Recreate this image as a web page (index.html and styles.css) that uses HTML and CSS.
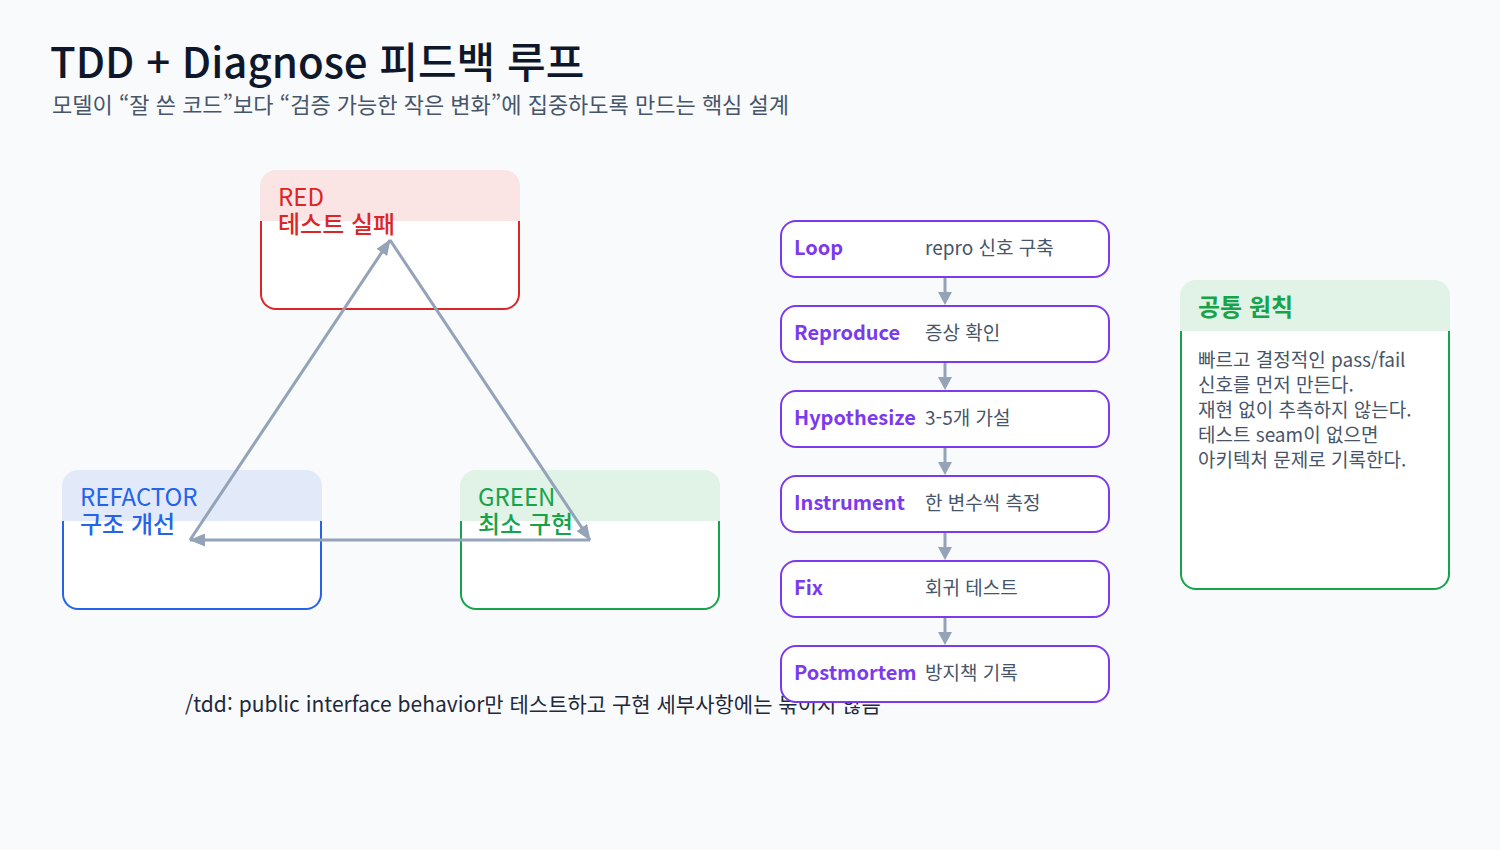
FILE: index.html
```html
<!DOCTYPE html>
<html lang="ko">
<head>
<meta charset="utf-8">
<title>TDD + Diagnose 피드백 루프</title>
<link rel="stylesheet" href="styles.css">
</head>
<body>
<header class="head">
  <h1 class="title">TDD + Diagnose 피드백 루프</h1>
  <p class="subtitle">모델이 “잘 쓴 코드”보다 “검증 가능한 작은 변화”에 집중하도록 만드는 핵심 설계</p>
</header>
<main class="main">
  <section class="cycle">
    <div class="node node-red">
      <div class="node-head"><div class="node-en">RED</div><div class="node-ko">테스트 실패</div></div>
      <div class="node-body"></div>
    </div>
    <div class="node node-blue">
      <div class="node-head"><div class="node-en">REFACTOR</div><div class="node-ko">구조 개선</div></div>
      <div class="node-body"></div>
    </div>
    <div class="node node-green">
      <div class="node-head"><div class="node-en">GREEN</div><div class="node-ko">최소 구현</div></div>
      <div class="node-body"></div>
    </div>
    <svg class="cycle-arrows" width="740" height="540" viewBox="0 0 740 540">
      <defs>
        <marker id="ah" markerUnits="userSpaceOnUse" markerWidth="16" markerHeight="13" viewBox="0 0 16 13" refX="15" refY="6.5" orient="auto">
          <path d="M0,0 L16,6.5 L0,13 z" fill="#94a3b8"/>
        </marker>
      </defs>
      <line x1="190" y1="370" x2="390" y2="70" stroke="#94a3b8" stroke-width="3" marker-end="url(#ah)"/>
      <line x1="390" y1="70" x2="590" y2="370" stroke="#94a3b8" stroke-width="3" marker-end="url(#ah)"/>
      <line x1="590" y1="370" x2="190" y2="370" stroke="#94a3b8" stroke-width="3" marker-end="url(#ah)"/>
    </svg>
    <p class="note">/tdd: public interface behavior만 테스트하고 구현 세부사항에는 묶이지 않음</p>
  </section>

  <section class="flow">
    <div class="step"><span class="step-label">Loop</span><span class="step-desc">repro 신호 구축</span></div>
    <div class="link"><svg width="16" height="27" viewBox="0 0 16 27"><line x1="8" y1="0" x2="8" y2="16" stroke="#94a3b8" stroke-width="3"/><path d="M1,14 L15,14 L8,27 z" fill="#94a3b8"/></svg></div>
    <div class="step"><span class="step-label">Reproduce</span><span class="step-desc">증상 확인</span></div>
    <div class="link"><svg width="16" height="27" viewBox="0 0 16 27"><line x1="8" y1="0" x2="8" y2="16" stroke="#94a3b8" stroke-width="3"/><path d="M1,14 L15,14 L8,27 z" fill="#94a3b8"/></svg></div>
    <div class="step"><span class="step-label">Hypothesize</span><span class="step-desc">3-5개 가설</span></div>
    <div class="link"><svg width="16" height="27" viewBox="0 0 16 27"><line x1="8" y1="0" x2="8" y2="16" stroke="#94a3b8" stroke-width="3"/><path d="M1,14 L15,14 L8,27 z" fill="#94a3b8"/></svg></div>
    <div class="step"><span class="step-label">Instrument</span><span class="step-desc">한 변수씩 측정</span></div>
    <div class="link"><svg width="16" height="27" viewBox="0 0 16 27"><line x1="8" y1="0" x2="8" y2="16" stroke="#94a3b8" stroke-width="3"/><path d="M1,14 L15,14 L8,27 z" fill="#94a3b8"/></svg></div>
    <div class="step"><span class="step-label">Fix</span><span class="step-desc">회귀 테스트</span></div>
    <div class="link"><svg width="16" height="27" viewBox="0 0 16 27"><line x1="8" y1="0" x2="8" y2="16" stroke="#94a3b8" stroke-width="3"/><path d="M1,14 L15,14 L8,27 z" fill="#94a3b8"/></svg></div>
    <div class="step"><span class="step-label">Postmortem</span><span class="step-desc">방지책 기록</span></div>
  </section>

  <aside class="principles">
    <div class="principles-head">공통 원칙</div>
    <div class="principles-body">
      <p class="principles-text">빠르고 결정적인 pass/fail<br>신호를 먼저 만든다.<br>재현 없이 추측하지 않는다.<br>테스트 seam이 없으면<br>아키텍처 문제로 기록한다.</p>
    </div>
  </aside>
</main>
</body>
</html>
```

FILE: styles.css
```css
* { box-sizing: border-box; }

html, body {
  margin: 0;
  padding: 0;
}

body {
  width: 1500px;
  height: 850px;
  overflow: hidden;
  background: #f8fafc;
  font-family: "Noto Sans CJK KR", "Noto Sans", sans-serif;
  color: #0f172a;
}

.head {
  padding: 36px 50px 0;
}

.title {
  margin: 0;
  font-size: 42px;
  line-height: 48px;
  font-weight: 500;
  color: #0f172a;
}

.subtitle {
  margin: 5px 0 0 2px;
  font-size: 22px;
  line-height: 28px;
  font-weight: 400;
  color: #475569;
}

.main {
  display: flex;
  align-items: flex-start;
  margin-top: 53px;
}

/* cycle diagram (free canvas) */
.cycle {
  position: relative;
  flex: 0 0 740px;
  height: 540px;
}

.node {
  position: absolute;
  width: 260px;
  height: 140px;
}

.node-red { left: 260px; top: 0; }
.node-blue { left: 62px; top: 300px; }
.node-green { left: 460px; top: 300px; }

.node-head {
  height: 51px;
  padding: 12px 18px 0;
  border-radius: 16px 16px 0 0;
  white-space: nowrap;
}

.node-en {
  font-size: 24px;
  line-height: 27px;
  font-weight: 400;
}

.node-ko {
  font-size: 24px;
  line-height: 27px;
  font-weight: 500;
}

.node-body {
  height: 89px;
  background: #ffffff;
  border: 2px solid;
  border-top: none;
  border-radius: 0 0 16px 16px;
}

.node-red .node-head { background: #fbe4e4; color: #dc2626; }
.node-red .node-body { border-color: #dc2626; }
.node-blue .node-head { background: #e2eafa; color: #2563eb; }
.node-blue .node-body { border-color: #2563eb; }
.node-green .node-head { background: #e1f2e6; color: #16a34a; }
.node-green .node-body { border-color: #16a34a; }

.cycle-arrows {
  position: absolute;
  left: 0;
  top: 0;
}

.note {
  position: absolute;
  left: 185px;
  top: 520px;
  margin: 0;
  font-size: 21px;
  line-height: 26px;
  color: #1e293b;
  white-space: nowrap;
}

/* diagnose flow */
.flow {
  position: relative;
  z-index: 1;
  flex: 0 0 330px;
  margin-left: 40px;
  margin-top: 50px;
  display: flex;
  flex-direction: column;
}

.step {
  height: 58px;
  background: #ffffff;
  border: 2px solid #7c3aed;
  border-radius: 16px;
  padding: 0 12px 5px;
  display: grid;
  grid-template-columns: 131px 1fr;
  align-items: center;
}

.step-label {
  font-size: 20px;
  line-height: 26px;
  font-weight: 700;
  color: #7c3aed;
  white-space: nowrap;
}

.step-desc {
  font-size: 19px;
  line-height: 24px;
  color: #475569;
  white-space: nowrap;
}

.link {
  height: 27px;
  display: flex;
  justify-content: center;
}

.link svg { display: block; }

/* principles card */
.principles {
  flex: 0 0 270px;
  margin-left: 70px;
  margin-top: 110px;
  height: 310px;
  display: flex;
  flex-direction: column;
}

.principles-head {
  height: 51px;
  flex: 0 0 51px;
  background: #e1f2e6;
  border-radius: 16px 16px 0 0;
  padding: 0 18px;
  display: flex;
  align-items: center;
  font-size: 24px;
  line-height: 30px;
  font-weight: 700;
  color: #16a34a;
}

.principles-body {
  flex: 1;
  background: #ffffff;
  border: 2px solid #16a34a;
  border-top: none;
  border-radius: 0 0 16px 16px;
  padding: 15px 16px 0;
}

.principles-text {
  margin: 0;
  font-size: 19px;
  line-height: 25px;
  color: #475569;
  white-space: nowrap;
}
```
